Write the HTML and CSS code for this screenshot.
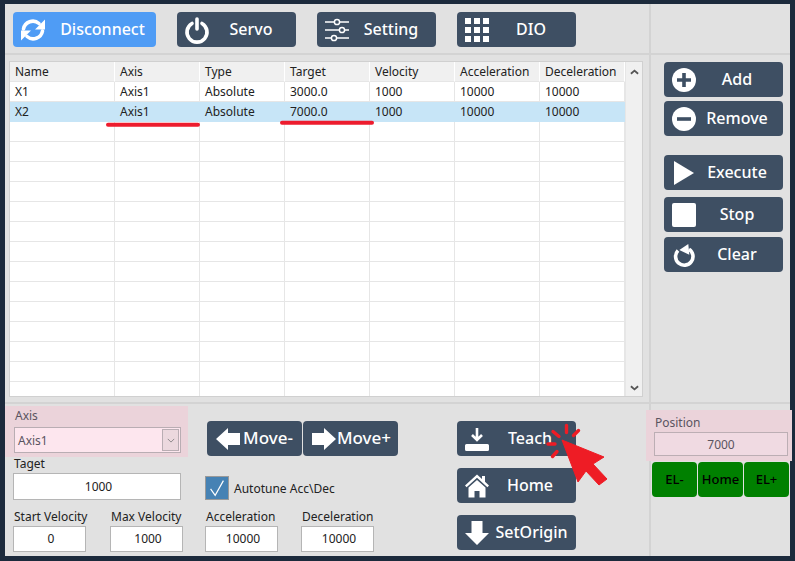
FILE: index.html
```html
<!DOCTYPE html>
<html lang="en">
<head>
  <meta charset="UTF-8" />
  <title>Motion Control</title>
  <link rel="stylesheet" href="styles.css">
</head>
<body>

  <div class="window">

    <div class="toolbar">
      <button class="btn btn-blue">
        <svg class="icon" viewBox="0 0 24 24"><path class="line" d="M2.5 11A9.5 9.5 0 0 1 18 5.5"/><path class="fill" d="M24 1.5V11.5H14Z"/><path class="line" d="M21.5 13A9.5 9.5 0 0 1 6 18.5"/><path class="fill" d="M0 22.5V12.5H10Z"/></svg>
        <span class="label">Disconnect</span>
      </button>
      <button class="btn">
        <svg class="icon" viewBox="0 0 24 24"><path class="line" d="M7 5.5A10 10 0 1 0 17 5.5"/><path class="line" d="M12 1V11"/></svg>
        <span class="label">Servo</span>
      </button>
      <button class="btn">
        <svg class="icon" viewBox="0 0 24 24"><path class="thin" d="M0 4H9M15 4H24M0 12H14M20 12H24M0 20H6M12 20H24"/><circle class="thin" cx="12" cy="4" r="2.6"/><circle class="thin" cx="17" cy="12" r="2.6"/><circle class="thin" cx="9" cy="20" r="2.6"/></svg>
        <span class="label">Setting</span>
      </button>
      <button class="btn">
        <svg class="icon" viewBox="0 0 24 24"><path class="fill" d="M0 0h6v6H0zM9 0h6v6H9zM18 0h6v6h-6zM0 9h6v6H0zM9 9h6v6H9zM18 9h6v6h-6zM0 18h6v6H0zM9 18h6v6H9zM18 18h6v6h-6z"/></svg>
        <span class="label">DIO</span>
      </button>
    </div>
    <div class="corner"></div>

    <div class="table-pane">
      <div class="table-frame">
        <table class="grid">
          <thead>
            <tr><th class="first">Name</th><th>Axis</th><th>Type</th><th>Target</th><th>Velocity</th><th>Acceleration</th><th>Deceleration</th></tr>
          </thead>
          <tbody>
            <tr><td>X1</td><td>Axis1</td><td>Absolute</td><td>3000.0</td><td>1000</td><td>10000</td><td>10000</td></tr>
            <tr class="selected"><td>X2</td><td>Axis1</td><td>Absolute</td><td>7000.0</td><td>1000</td><td>10000</td><td>10000</td></tr>
            <tr><td></td><td></td><td></td><td></td><td></td><td></td><td></td></tr>
            <tr><td></td><td></td><td></td><td></td><td></td><td></td><td></td></tr>
            <tr><td></td><td></td><td></td><td></td><td></td><td></td><td></td></tr>
            <tr><td></td><td></td><td></td><td></td><td></td><td></td><td></td></tr>
            <tr><td></td><td></td><td></td><td></td><td></td><td></td><td></td></tr>
            <tr><td></td><td></td><td></td><td></td><td></td><td></td><td></td></tr>
            <tr><td></td><td></td><td></td><td></td><td></td><td></td><td></td></tr>
            <tr><td></td><td></td><td></td><td></td><td></td><td></td><td></td></tr>
            <tr><td></td><td></td><td></td><td></td><td></td><td></td><td></td></tr>
            <tr><td></td><td></td><td></td><td></td><td></td><td></td><td></td></tr>
            <tr><td></td><td></td><td></td><td></td><td></td><td></td><td></td></tr>
            <tr><td></td><td></td><td></td><td></td><td></td><td></td><td></td></tr>
            <tr><td></td><td></td><td></td><td></td><td></td><td></td><td></td></tr>
            <tr><td></td><td></td><td></td><td></td><td></td><td></td><td></td></tr>
          </tbody>
        </table>
        <div class="scrollbar">
          <svg class="arrow" viewBox="0 0 10 6"><path d="M1 5L5 1.5L9 5"/></svg>
          <svg class="arrow" viewBox="0 0 10 6"><path d="M1 1L5 4.5L9 1"/></svg>
        </div>
      </div>
    </div>

    <div class="side">
      <button class="btn">
        <svg class="icon" viewBox="0 0 24 24"><circle class="fill" cx="12" cy="12" r="12"/><path class="minus" d="M12 5V19M5 12H19"/></svg>
        <span class="label">Add</span>
      </button>
      <button class="btn gap-4">
        <svg class="icon" viewBox="0 0 24 24"><circle class="fill" cx="12" cy="12" r="12"/><path class="minus" d="M5 12H19"/></svg>
        <span class="label">Remove</span>
      </button>
      <button class="btn gap-19">
        <svg class="icon" viewBox="0 0 24 24"><path class="fill" d="M2 0L22 12L2 24Z"/></svg>
        <span class="label">Execute</span>
      </button>
      <button class="btn gap-7">
        <svg class="icon" viewBox="0 0 24 24"><rect class="fill" x="0" y="0" width="24" height="24" rx="2"/></svg>
        <span class="label">Stop</span>
      </button>
      <button class="btn gap-5">
        <svg class="icon" viewBox="0 0 24 24"><path class="line-butt" d="M6 7.5A8.7 8.7 0 1 0 17 6.2"/><path class="fill" d="M16.3 1L17.3 11.7L7.3 7Z"/></svg>
        <span class="label">Clear</span>
      </button>
    </div>

    <div class="bottom">
      <div class="col-axis">
        <div class="axis-group">
          <div class="caption">Axis</div>
          <div class="combo">
            <span class="combo-text">Axis1</span>
            <span class="combo-btn"><svg class="combo-arrow" viewBox="0 0 10 6"><path d="M1 1L5 5L9 1"/></svg></span>
          </div>
        </div>
        <div class="caption taget">Taget</div>
        <input class="num num-wide" value="1000">
        <div class="fields">
          <div class="field"><div class="caption">Start Velocity</div><input class="num" value="0"></div>
          <div class="field"><div class="caption">Max Velocity</div><input class="num" value="1000"></div>
        </div>
      </div>

      <div class="col-move">
        <div class="move-row">
          <button class="btn btn-move">
            <svg class="icon" viewBox="0 0 24 24"><path class="fill" d="M0 12L12 1V6H24V18H12V23Z"/></svg>
            <span class="label">Move-</span>
          </button>
          <button class="btn btn-move">
            <svg class="icon" viewBox="0 0 24 24"><path class="fill" d="M24 12L12 1V6H0V18H12V23Z"/></svg>
            <span class="label">Move+</span>
          </button>
        </div>
        <div class="check-row">
          <span class="check"><svg viewBox="0 0 24 24"><path d="M5 13L10 20L19 4"/></svg></span>
          <span class="check-label">Autotune Acc\Dec</span>
        </div>
        <div class="fields">
          <div class="field"><div class="caption">Acceleration</div><input class="num" value="10000"></div>
          <div class="field"><div class="caption">Deceleration</div><input class="num" value="10000"></div>
        </div>
      </div>

      <div class="col-teach">
        <button class="btn">
          <svg class="icon" viewBox="0 0 24 24"><path class="fill" d="M1.5 17H22.5A1.5 1.5 0 0 1 24 18.5V22.5A1.5 1.5 0 0 1 22.5 24H1.5A1.5 1.5 0 0 1 0 22.5V18.5A1.5 1.5 0 0 1 1.5 17Z"/><path class="thick" d="M12 1V12M7 8L12 13L17 8"/></svg>
          <span class="label">Teach</span>
        </button>
        <button class="btn">
          <svg class="icon" viewBox="0 0 24 24"><path class="fill" d="M12 0.5L0 11.5L1.6 13.3L12 3.8L22.4 13.3L24 11.5L20 7.8V2H17V5.1Z"/><path class="fill" d="M3.5 13.5L12 6L20.5 13.5V23.5H14.5V17H9.5V23.5H3.5Z"/></svg>
          <span class="label">Home</span>
        </button>
        <button class="btn">
          <svg class="icon" viewBox="0 0 24 24"><path class="fill" d="M12 24L0 12H6.5V0H17.5V12H24Z"/></svg>
          <span class="label label-tight">SetOrigin</span>
        </button>
      </div>
    </div>

    <div class="bottom-side">
      <div class="pos-group">
        <div class="caption">Position</div>
        <input class="num num-pos" value="7000">
      </div>
      <div class="limits">
        <button class="limit">EL-</button>
        <button class="limit">Home</button>
        <button class="limit">EL+</button>
      </div>
    </div>

  </div>

  <!-- red annotations drawn over the screenshot -->
  <svg class="marks" viewBox="0 0 795 561">
    <path class="mark-line" d="M108 124.7H198M282 122.7H372"/>
    <path class="mark-ray" d="M548 444H555M553 431.5L559 436.5M566.5 425.5V432.5M578.5 430.5L573.5 435.5M552.5 456.5L557 451.5"/>
    <path class="mark-arrow" d="M562 440L604 457L593 464L607 479L599 485L586 471L578 482Z"/>
  </svg>

</body>
</html>
```

FILE: styles.css
```css
* {
  box-sizing: border-box;
}

body {
  margin: 0;
  height: 561px;
  overflow: hidden;
  position: relative;
  background: #1c2a3c;
  font-family: 'Noto Sans', sans-serif;
  color: #222;
}

.window {
  margin: 4px 0 0 5px;
  width: 785px;
  height: 552px;
  background: #e1e1e1;
  display: grid;
  grid-template-columns: 644px 141px;
  grid-template-rows: 51px 349px 152px;
}

.toolbar,
.table-pane,
.corner {
  border-bottom: 2px solid #d3d3d3;
}

.side,
.bottom-side,
.corner {
  border-left: 2px solid #d3d3d3;
}

.side {
  border-bottom: 2px solid #d3d3d3;
}

.bottom {
  display: flex;
}

/* buttons */
.btn {
  display: flex;
  align-items: center;
  width: 119px;
  height: 35px;
  padding: 0 0 0 8px;
  border: none;
  border-radius: 4px;
  background: #3e4f63;
  color: #fff;
  font-family: inherit;
  font-size: 16px;
  font-weight: 500;
}

.btn-blue {
  width: 143px;
  background: #4f9cf5;
}

.icon {
  width: 24px;
  height: 24px;
  flex: none;
  overflow: visible;
}

.label {
  flex: 1;
  margin-bottom: 2px;
  padding-right: 5px;
  text-align: center;
}

.toolbar .label {
  padding-right: 3px;
}

.toolbar .btn-blue .label {
  padding: 0 0 0 4px;
}

.btn-move .label {
  padding-right: 6px;
}

.label-tight {
  padding-right: 2px;
}

.line {
  fill: none;
  stroke: #fff;
  stroke-width: 3.6;
  stroke-linecap: round;
}

.line-butt {
  fill: none;
  stroke: #fff;
  stroke-width: 3.6;
}

.thick {
  fill: none;
  stroke: #fff;
  stroke-width: 2.6;
}

.thin {
  fill: none;
  stroke: #fff;
  stroke-width: 1.5;
}

.fill {
  fill: #fff;
}

.minus {
  fill: none;
  stroke: #3e4f63;
  stroke-width: 3.6;
}

.gap-4 { margin-top: 4px; }
.gap-5 { margin-top: 5px; }
.gap-7 { margin-top: 7px; }
.gap-19 { margin-top: 19px; }

/* top bar */
.toolbar {
  display: flex;
  gap: 21px;
  padding: 8px 0 0 8px;
}

/* table */
.table-pane {
  padding: 6px 0 0 4px;
}

.table-frame {
  display: flex;
  width: 634px;
  height: 336px;
  border: 1px solid #d0d0d0;
  background: #fff;
  overflow: hidden;
}

.grid {
  width: 615px;
  flex: none;
  table-layout: fixed;
  border-collapse: separate;
  border-spacing: 0;
  font-size: 12px;
  align-self: flex-start;
}

.grid th,
.grid td {
  width: 85px;
  height: 20px;
  padding: 0 0 0 5px;
  border-right: 1px solid #e6e6e6;
  border-bottom: 1px solid #e6e6e6;
  font-weight: 400;
  text-align: left;
  white-space: nowrap;
}

.grid th {
  background: #f0f0f0;
  border-right-color: #fff;
}

.grid th.first {
  width: 105px;
}

.grid .selected td {
  background: #c7e5f7;
  border-color: #c7e5f7;
}

.scrollbar {
  flex: 1;
  display: flex;
  flex-direction: column;
  justify-content: space-between;
  align-items: center;
  padding: 7px 0 5px;
  background: #f0f0f0;
  border-left: 1px solid #e6e6e6;
}

.arrow {
  width: 9px;
  height: 6px;
}

.arrow path {
  fill: none;
  stroke: #555;
  stroke-width: 2;
}

/* right column */
.side {
  padding: 7px 0 0 13px;
}

/* lower panel */
.caption {
  font-size: 12px;
  line-height: 14px;
  white-space: nowrap;
}

.col-axis {
  width: 183px;
  margin-top: 2px;
}

.axis-group {
  height: 51px;
  padding: 3px 0 0 9px;
  background: #ebd3da;
  color: #5a5460;
}

.axis-group .caption {
  padding: 0 0 0 1px;
}

.combo {
  display: flex;
  align-items: center;
  justify-content: space-between;
  width: 167px;
  height: 26px;
  margin-top: 4px;
  padding: 0 1px 0 3px;
  border: 1px solid #b9adb3;
  background: #fde6ee;
  font-size: 12px;
}

.combo-btn {
  display: flex;
  align-items: center;
  justify-content: center;
  width: 17px;
  height: 22px;
  border: 1px solid #b9adb3;
  background: #ecd8de;
}

.combo-arrow {
  width: 8px;
  height: 5px;
}

.combo-arrow path {
  fill: none;
  stroke: #777;
  stroke-width: 1;
}

.taget {
  padding-left: 9px;
}

.num {
  display: block;
  width: 73px;
  height: 26px;
  padding: 0 0 1px 3px;
  border: 1px solid #b5b5b5;
  background: #fff;
  font-family: inherit;
  font-size: 12px;
  color: #222;
  text-align: center;
}

.num-wide {
  width: 168px;
  height: 27px;
  margin: 2px 0 0 8px;
}

.fields {
  display: flex;
  gap: 24px;
  margin-top: 9px;
  padding-left: 8px;
}

.field {
  width: 73px;
}

.field .caption {
  padding: 1px 0 0 1px;
  height: 14px;
}

.field .num {
  margin-top: 3px;
}

.col-move {
  width: 193px;
  margin-left: 17px;
  padding-top: 17px;
}

.move-row {
  display: flex;
  gap: 1px;
  margin-left: 2px;
}

.btn-move {
  width: 95px;
  padding-left: 9px;
  font-size: 17px;
}

.check-row {
  display: flex;
  align-items: center;
  gap: 5px;
  margin-top: 20px;
}

.check {
  width: 24px;
  height: 24px;
  border: 1px solid #999;
  background: #4682b4;
}

.check svg {
  display: block;
  width: 22px;
  height: 22px;
}

.check path {
  fill: none;
  stroke: #fff;
  stroke-width: 1.3;
}

.check-label {
  font-size: 12px;
}

.col-move .fields {
  gap: 23px;
  padding-left: 0;
}

.col-teach {
  display: flex;
  flex-direction: column;
  gap: 12px;
  margin-left: 59px;
  padding-top: 17px;
}

.pos-group {
  width: 146px;
  height: 51px;
  margin: 6px 0 0 -5px;
  padding: 6px 0 0 8px;
  background: #ebd3da;
  color: #5a5460;
  position: relative;
}

.pos-group .caption {
  padding-left: 1px;
}

.num-pos {
  width: 134px;
  height: 24px;
  margin-top: 2px;
  padding: 0;
  border-color: #bcaeb4;
  background: #f0dae2;
  color: #5a5460;
}

.limits {
  display: flex;
  gap: 1px;
  margin: 1px 0 0 1px;
}

.limit {
  width: 45px;
  height: 35px;
  padding: 0 0 2px;
  border: none;
  border-radius: 4px;
  background: #008000;
  color: #000;
  font-family: inherit;
  font-size: 13px;
  font-weight: 500;
}

/* red marks on top */
.marks {
  position: absolute;
  left: 0;
  top: 0;
  width: 795px;
  height: 561px;
  pointer-events: none;
}

.mark-line {
  fill: none;
  stroke: #ed1c2e;
  stroke-width: 4;
  stroke-linecap: round;
}

.mark-ray {
  fill: none;
  stroke: #ee1c25;
  stroke-width: 3.4;
  stroke-linecap: round;
}

.mark-arrow {
  fill: #ee1c25;
  stroke: #ee1c25;
  stroke-width: 1;
  stroke-linejoin: round;
}
```
